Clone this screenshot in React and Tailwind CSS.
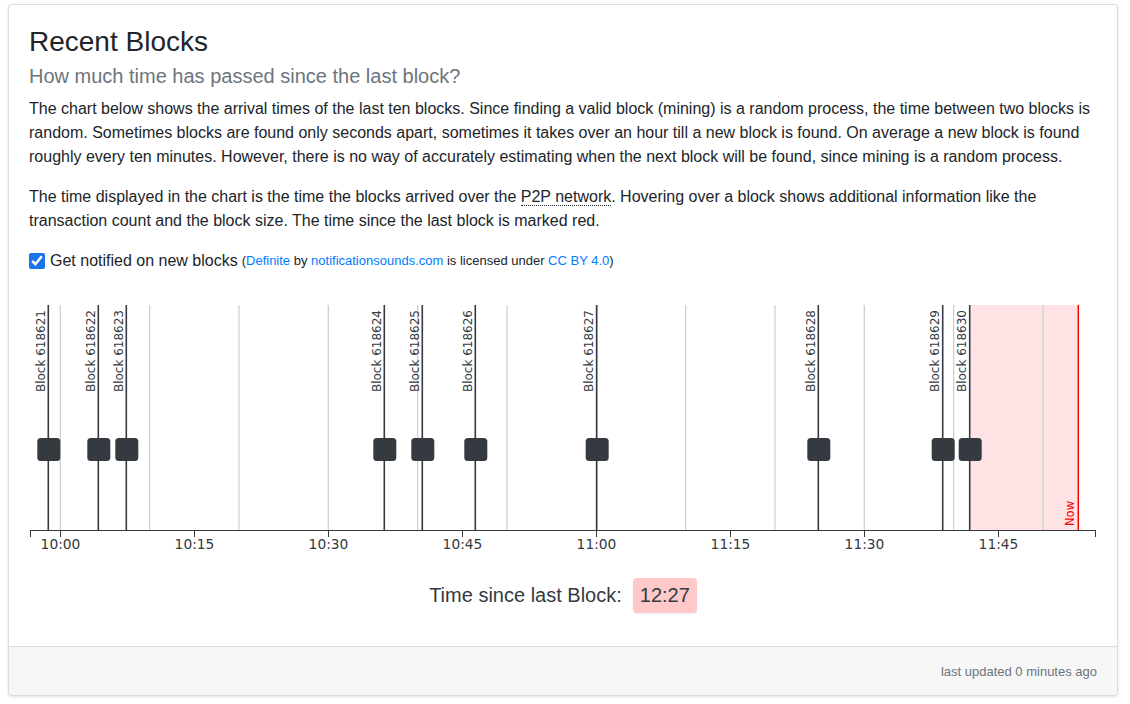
import React from 'react';

const PX_PER_MIN = 134 / 15;
const xAt = (min) => 60.3 + min * PX_PER_MIN;

const blocks = [
  { n: 618621, x: 48.3 },
  { n: 618622, x: 98.3 },
  { n: 618623, x: 126.3 },
  { n: 618624, x: 384.3 },
  { n: 618625, x: 422.3 },
  { n: 618626, x: 475.3 },
  { n: 618627, x: 596.7 },
  { n: 618628, x: 818.3 },
  { n: 618629, x: 942.7 },
  { n: 618630, x: 969.7 },
];

const ticks = ['10:00', '10:15', '10:30', '10:45', '11:00', '11:15', '11:30', '11:45'];
const grid = Array.from({ length: 12 }, (_, i) => xAt(i * 10));

const NOW = 1078.3;
const TOP = 305;
const AXIS = 530;

function BlockChart() {
  const last = blocks[blocks.length - 1].x;
  return (
    <svg width="1068" height="270" viewBox="29 290 1068 270" className="block">
      {/* time since last block */}
      <rect x={last} y={TOP} width={NOW - last} height={AXIS - TOP} fill="#ffe2e4" />

      {/* grid */}
      {grid.map((x, i) => (
        <line key={i} x1={x} x2={x} y1={TOP} y2={AXIS} stroke="#d0d0d0" strokeWidth="1.3" />
      ))}

      {/* blocks */}
      {blocks.map((b) => (
        <g key={b.n}>
          <line x1={b.x} x2={b.x} y1={TOP} y2={AXIS} stroke="#343a40" strokeWidth="1.6" />
          <rect x={b.x - 11} y={438} width="23" height="23" rx="3.5" fill="#343a40" />
          <text
            transform={`translate(${b.x - 3.5} ${TOP + 5}) rotate(-90)`}
            textAnchor="end"
            fontSize="12"
            fill="#343a40"
            style={{ fontFamily: '"DejaVu Sans", sans-serif' }}
          >
            Block {b.n}
          </text>
        </g>
      ))}

      {/* now marker */}
      <line x1={NOW} x2={NOW} y1={TOP} y2={AXIS} stroke="#ff0000" strokeWidth="1.5" />
      <text
        transform={`translate(${NOW - 4} ${AXIS - 4}) rotate(-90)`}
        fontSize="11.5"
        fill="#ff0000"
        style={{ fontFamily: '"DejaVu Sans", sans-serif' }}
      >
        Now
      </text>

      {/* axis */}
      <line x1="30.5" x2="1095.5" y1={AXIS + 0.5} y2={AXIS + 0.5} stroke="#343a40" strokeWidth="1" />
      <line x1="30.5" x2="30.5" y1={AXIS} y2={AXIS + 7} stroke="#343a40" strokeWidth="1" />
      <line x1="1095.5" x2="1095.5" y1={AXIS} y2={AXIS + 7} stroke="#343a40" strokeWidth="1" />
      {ticks.map((t, i) => {
        const x = Math.round(xAt(i * 15)) + 0.5;
        return (
          <g key={t}>
            <line x1={x} x2={x} y1={AXIS} y2={AXIS + 7} stroke="#343a40" strokeWidth="1" />
            <text
              x={x}
              y={549}
              textAnchor="middle"
              fontSize="13.8"
              fill="#343a40"
              style={{ fontFamily: '"DejaVu Sans", sans-serif' }}
            >
              {t}
            </text>
          </g>
        );
      })}
    </svg>
  );
}

export default function App() {
  return (
    <div className="min-h-[704px] bg-white pt-1 pl-2" style={{ fontFamily: '"Liberation Sans", Arial, sans-serif' }}>
      <div className="w-[1110px] rounded border border-[#dcdcdc] bg-white shadow-[0_1px_3px_rgba(0,0,0,0.12)] text-[#212529]">
        <div className="px-5 pt-5 pb-[33px]">
          <h3 className="text-[28px] leading-[1.2] mb-[5px]">Recent Blocks</h3>
          <h5 className="text-[20px] leading-6 text-[#6c757d] mb-[9px]">How much time has passed since the last block?</h5>
          <p className="text-base leading-6 mb-4">
            The chart below shows the arrival times of the last ten blocks. Since finding a valid block (mining) is a random process, the time between two blocks is random. Sometimes blocks are found only seconds apart, sometimes it takes over an hour till a new block is found. On average a new block is found roughly every ten minutes. However, there is no way of accurately estimating when the next block will be found, since mining is a random process.
          </p>
          <p className="text-base leading-6 mb-4">
            The time displayed in the chart is the time the blocks arrived over the{' '}
            <abbr className="no-underline border-b border-dotted border-[#212529] cursor-help" title="Peer-to-peer">P2P network</abbr>. Hovering over a block shows additional information like the transaction count and the block size. The time since the last block is marked red.
          </p>
          <label className="flex items-center text-base leading-6">
            <input type="checkbox" defaultChecked className="w-4 h-4 m-0 mr-[5px] accent-[#1a73e8]" />
            <span>Get notified on new blocks</span>
            <span className="text-[13px] ml-1">
              (<a href="#" className="text-[#007bff]">Definite</a> by{' '}
              <a href="#" className="text-[#007bff]">notificationsounds.com</a> is licensed under{' '}
              <a href="#" className="text-[#007bff]">CC BY 4.0</a>)
            </span>
          </label>

          <div className="mt-[17px]">
            <BlockChart />
          </div>

          <div className="mt-[18px] flex items-center justify-center gap-[11px]">
            <span className="text-[20px] text-[#343a40]">Time since last Block:</span>
            <span className="text-[20px] leading-[35px] h-[35px] px-[7px] rounded bg-[#ffc9c9] text-[#343a40] shadow-[0_1px_2px_rgba(0,0,0,0.08)]">12:27</span>
          </div>
        </div>
        <div className="border-t border-[#dcdcdc] bg-[#f7f7f7] h-[49px] px-5 pt-[2px] flex items-center justify-end rounded-b">
          <span className="text-[13px] text-[#6c757d]">last updated 0 minutes ago</span>
        </div>
      </div>
    </div>
  );
}
